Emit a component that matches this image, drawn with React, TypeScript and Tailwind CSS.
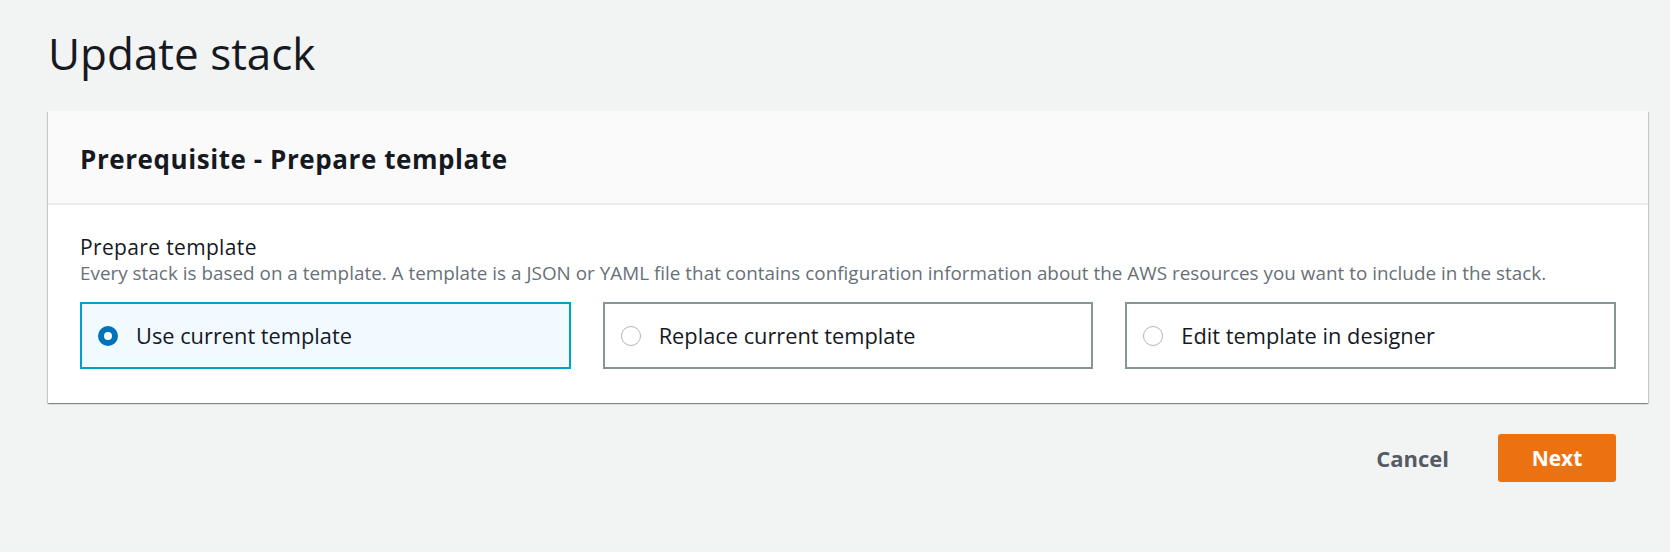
import React from "react";

const font = { fontFamily: '"Open Sans", "Noto Sans", Arial, sans-serif' };

function Radio({ checked }: { checked: boolean }) {
  return checked ? (
    <span className="box-border block h-[20px] w-[20px] shrink-0 rounded-full border-[6px] border-[#0073bb] bg-white" />
  ) : (
    <span className="box-border block h-[20px] w-[20px] shrink-0 rounded-full border-[1.5px] border-[#aab7b8] bg-white" />
  );
}

function Tile({ label, checked }: { label: string; checked?: boolean }) {
  return (
    <div
      className={
        checked
          ? "box-border flex h-[67px] items-center gap-[18px] border-2 border-[#00a1c9] bg-[#f1faff] pl-[16px]"
          : "box-border flex h-[67px] items-center gap-[18px] border-2 border-[#879596] bg-white pl-[16px]"
      }
    >
      <Radio checked={!!checked} />
      <span className="text-[21.8px] leading-[28px] text-[#16191f]">{label}</span>
    </div>
  );
}

export default function App() {
  return (
    <div className="min-h-[552px] w-full bg-[#f2f3f3] pl-[48px] pr-[22px]" style={font}>
      <h1 className="pt-[27px] text-[44px] font-normal leading-[52px] text-[#16191f]">Update stack</h1>
      <div className="mt-[32px] bg-white shadow-[0_1px_1px_0_rgba(0,28,36,0.3),1px_1px_1px_0_rgba(0,28,36,0.15),-1px_1px_1px_0_rgba(0,28,36,0.15)]">
        <div className="flex h-[94px] items-center border-b-2 border-[#eaeded] bg-[#fafafa] px-[32px] pt-[3px]">
          <h2 className="text-[26px] font-bold leading-[32px] tracking-[0.57px] text-[#16191f]">
            Prerequisite - Prepare template
          </h2>
        </div>
        <div className="px-[32px] pb-[34px] pt-[28px]">
          <div className="text-[21px] leading-[28px] tracking-[0.35px] text-[#16191f]">Prepare template</div>
          <div className="text-[18.85px] leading-[24px] tracking-[0.02px] text-[#687078]">
            Every stack is based on a template. A template is a JSON or YAML file that contains configuration information about the AWS resources you want to include in the stack.
          </div>
          <div className="mt-[17px] grid grid-cols-3 gap-[32px]">
            <Tile label="Use current template" checked />
            <Tile label="Replace current template" />
            <Tile label="Edit template in designer" />
          </div>
        </div>
      </div>
      <div className="mt-[31px] flex items-center justify-end gap-[49px] pr-[32px]">
        <button className="text-[22px] font-bold leading-[28px] text-[#545b64]">Cancel</button>
        <button className="h-[48px] w-[118px] rounded-[3px] bg-[#ec7211] text-[21px] font-bold leading-[28px] text-white">
          Next
        </button>
      </div>
    </div>
  );
}
